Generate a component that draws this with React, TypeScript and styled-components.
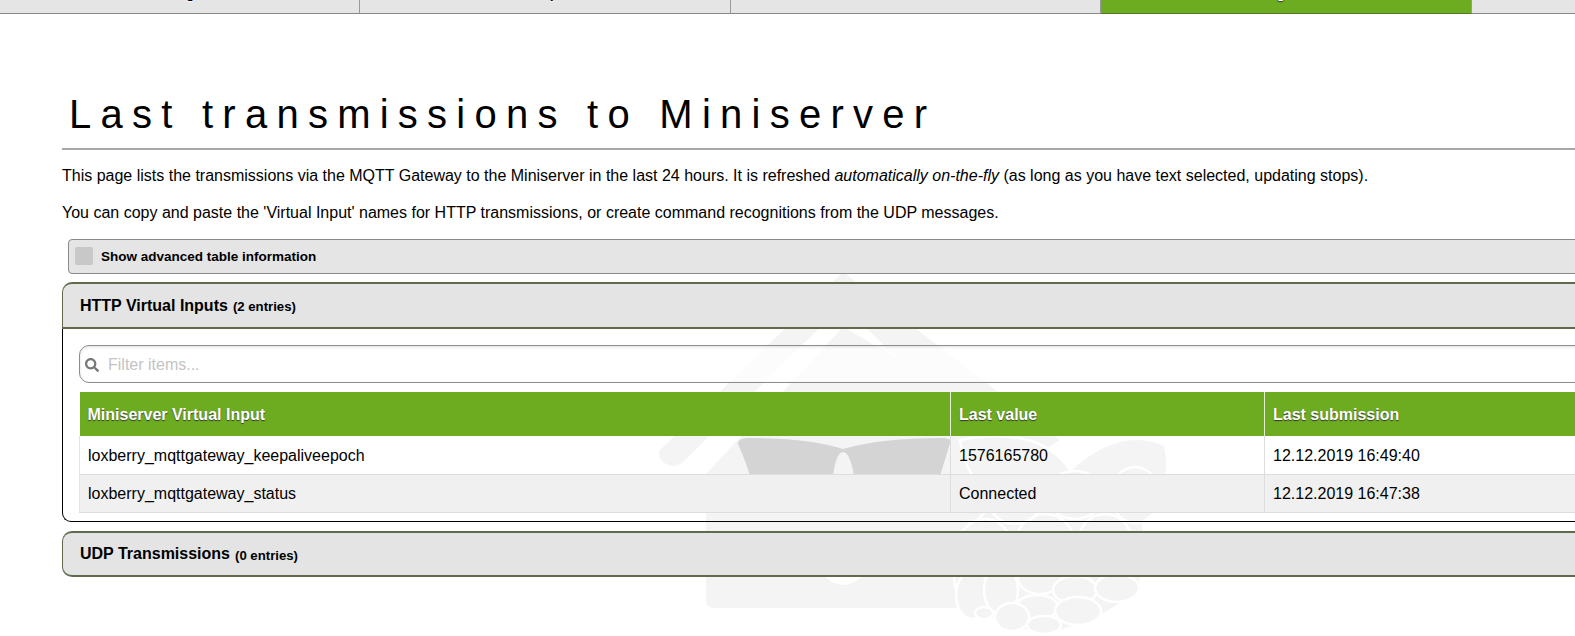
import styled, { createGlobalStyle } from "styled-components";
import { FaSearch } from "react-icons/fa";

const GlobalStyle = createGlobalStyle`
  html, body {
    margin: 0;
    padding: 0;
    height: 636px;
    overflow: hidden;
    background: #fff;
    font-family: "Liberation Sans", Arial, sans-serif;
    color: #000;
  }
`;

// the page is scrolled a little, so the tab labels are cut off at the top
const Page = styled.div`
  position: relative;
  width: 2000px;
  margin-top: -30px;
`;

const Watermark = styled.svg`
  position: absolute;
  left: 650px;
  top: 295px;
  width: 530px;
  height: 371px;
`;

const TabBar = styled.nav`
  position: relative;
  display: flex;
  margin-left: -10px;
`;

const Tab = styled.a<{ $active?: boolean }>`
  box-sizing: border-box;
  width: 370.4px;
  height: 44px;
  padding-top: 15px;
  text-align: center;
  font-size: 14px;
  font-weight: bold;
  border-right: 1px solid #999;
  border-bottom: 1px solid ${(p) => (p.$active ? "#55762c" : "#888")};
  background: ${(p) => (p.$active ? "#6dac20" : "#e5e5e5")};
  color: ${(p) => (p.$active ? "#fff" : "#000")};
  text-shadow: 0 1px 1px ${(p) => (p.$active ? "#333" : "#fff")};
`;

const Main = styled.main`
  position: relative;
  padding-left: 62px;
`;

const Title = styled.h1`
  margin: 0;
  padding: 77px 0 0 7px;
  height: 57px;
  font-size: 40px;
  line-height: 46px;
  font-weight: normal;
  letter-spacing: 9.25px;
  border-bottom: 2px solid #a8a8a8;
`;

const Intro = styled.p`
  margin: 0;
  padding-top: 17px;
  height: 20px;
  font-size: 16px;
  line-height: 20px;
  &:first-of-type {
    padding-top: 16px;
  }
`;

const AdvancedToggle = styled.label`
  box-sizing: border-box;
  display: flex;
  align-items: center;
  gap: 8px;
  height: 35px;
  margin: 16px 0 8px 6px;
  padding: 0 0 1px 6px;
  background: #e5e5e5;
  border: 1px solid #8a8a8a;
  border-radius: 4px;
  font-size: 13.5px;
  font-weight: bold;
`;

const CheckBox = styled.span`
  width: 18px;
  height: 18px;
  border-radius: 2px;
  background: #c8c8c8;
`;

const Panel = styled.section`
  margin-bottom: 9px;
`;

const PanelHead = styled.h3<{ $open?: boolean }>`
  box-sizing: border-box;
  margin: 0;
  height: ${(p) => (p.$open ? 47 : 46)}px;
  padding-left: 17px;
  display: flex;
  align-items: center;
  gap: 5px;
  font-size: 16px;
  font-weight: bold;
  background: #e4e4e4;
  border: 1px solid #5f6b4c;
  border-width: 2px 0 2px 1px;
  border-radius: ${(p) => (p.$open ? "10px 0 0 0" : "10px 0 0 10px")};
`;

const Entries = styled.small`
  font-size: 13.2px;
  padding-top: 2px;
`;

const PanelBody = styled.div`
  height: 193px;
  padding: 16px 0 0 16px;
  box-sizing: border-box;
  border-left: 1px solid #000;
  border-bottom: 1px solid #000;
  border-radius: 0 0 0 9px;
`;

const FilterBox = styled.div`
  box-sizing: border-box;
  display: flex;
  align-items: center;
  gap: 9px;
  height: 38px;
  padding: 2px 0 0 5px;
  background: rgba(255, 255, 255, 0.75);
  border: 1px solid #8c8c8c;
  border-radius: 10px;
  box-shadow: inset 0 1px 3px rgba(0, 0, 0, 0.12);
  color: #777;
  font-size: 14px;
`;

const FilterInput = styled.input`
  flex: 1;
  border: 0;
  padding: 0;
  background: transparent;
  font: 16px "Liberation Sans", Arial, sans-serif;
  &::placeholder {
    color: #c4c4c4;
    opacity: 1;
  }
`;

const Table = styled.table`
  margin-top: 9px;
  width: 1900px;
  table-layout: fixed;
  border-collapse: collapse;
  font-size: 16px;
`;

const HeadCell = styled.th<{ $w: number }>`
  box-sizing: border-box;
  width: ${(p) => p.$w}px;
  height: 44px;
  padding: 2px 8px 0;
  text-align: left;
  font-weight: bold;
  color: #fff;
  background: #6dac20;
  border-right: 1px solid #e4efd2;
  text-shadow: 0 1px 1px #333;
`;

const Row = styled.tr<{ $striped?: boolean }>`
  height: 38px;
  background: ${(p) => (p.$striped ? "#f0f0f0" : "transparent")};
`;

const Cell = styled.td`
  box-sizing: border-box;
  padding: 2px 8px 0;
  border-right: 1px solid #ddd;
  border-bottom: 1px solid #ddd;
  &:first-child {
    border-left: 1px solid #e4e4e4;
  }
`;

const lobes: [number, number, number, number][] = [
  [985, 545, 26, 26],
  [1045, 540, 28, 26],
  [1105, 540, 26, 26],
  [1015, 500, 26, 24],
  [1075, 495, 28, 24],
  [1135, 495, 24, 28],
  [973, 595, 17, 24],
  [1001, 590, 17, 24],
  [1040, 578, 22, 16],
  [1075, 590, 22, 14],
  [1117, 588, 22, 14],
  [1037, 607, 21, 12],
  [1078, 611, 23, 14],
  [1012, 617, 17, 14],
  [1044, 625, 17, 9],
  [984, 613, 9, 6],
];

const App = () => {
  return (
    <Page>
      <GlobalStyle />
      <Watermark viewBox="650 265 530 371" aria-hidden="true">
        {/* roof */}
        <path
          d="M843 272 L660 450 Q656 462 672 466 Q680 466 686 459 L843 305 L1010 470 L1060 440 Z"
          fill="#f4f4f4"
        />
        {/* house body */}
        <path
          d="M843 327 L706 474 V600 Q706 608 714 608 H990 L1040 440 Z"
          fill="#f4f4f4"
        />
        <path d="M800 540 Q843 630 886 540 Z" fill="#fff" />
        {/* sunglasses */}
        <path
          d="M738 444 Q738 438 748 438 Q810 438 843 449 Q880 438 945 438 L951 440 L940 476 H854 Q850 452 843 452 Q836 452 833 476 H750 Q746 462 738 444 Z"
          fill="#d4d4d4"
        />
        {/* raspberry */}
        <path
          d="M960 440 Q1040 425 1070 470 Q1120 425 1165 445 Q1175 490 1140 500 Q1150 560 1137 590 Q1100 625 1044 634 Q985 625 956 590 Q945 540 1000 500 Q965 480 960 440 Z"
          fill="#f4f4f4"
          stroke="#fff"
          strokeWidth="2.5"
        />
        {lobes.map(([cx, cy, rx, ry]) => (
          <ellipse
            key={`${cx}-${cy}`}
            cx={cx}
            cy={cy}
            rx={rx}
            ry={ry}
            fill="#f4f4f4"
            stroke="#fff"
            strokeWidth="2.5"
          />
        ))}
      </Watermark>

      <TabBar>
        <Tab>Settings</Tab>
        <Tab>Subscriptions</Tab>
        <Tab>Conversions</Tab>
        <Tab $active>Incoming overview</Tab>
        <Tab>Logs</Tab>
      </TabBar>

      <Main>
        <Title>Last transmissions to Miniserver</Title>
        <Intro>
          This page lists the transmissions via the MQTT Gateway to the Miniserver in the last 24
          hours. It is refreshed <em>automatically on-the-fly</em> (as long as you have text
          selected, updating stops).
        </Intro>
        <Intro>
          You can copy and paste the 'Virtual Input' names for HTTP transmissions, or create command
          recognitions from the UDP messages.
        </Intro>

        <AdvancedToggle>
          <CheckBox />
          Show advanced table information
        </AdvancedToggle>

        <Panel>
          <PanelHead $open>
            HTTP Virtual Inputs <Entries>(2 entries)</Entries>
          </PanelHead>
          <PanelBody>
            <FilterBox>
              <FaSearch />
              <FilterInput placeholder="Filter items..." />
            </FilterBox>
            <Table>
              <thead>
                <tr>
                  <HeadCell $w={871}>Miniserver Virtual Input</HeadCell>
                  <HeadCell $w={314}>Last value</HeadCell>
                  <HeadCell $w={715}>Last submission</HeadCell>
                </tr>
              </thead>
              <tbody>
                <Row>
                  <Cell>loxberry_mqttgateway_keepaliveepoch</Cell>
                  <Cell>1576165780</Cell>
                  <Cell>12.12.2019 16:49:40</Cell>
                </Row>
                <Row $striped>
                  <Cell>loxberry_mqttgateway_status</Cell>
                  <Cell>Connected</Cell>
                  <Cell>12.12.2019 16:47:38</Cell>
                </Row>
              </tbody>
            </Table>
          </PanelBody>
        </Panel>

        <Panel>
          <PanelHead>
            UDP Transmissions <Entries>(0 entries)</Entries>
          </PanelHead>
        </Panel>
      </Main>
    </Page>
  );
};

export default App;
